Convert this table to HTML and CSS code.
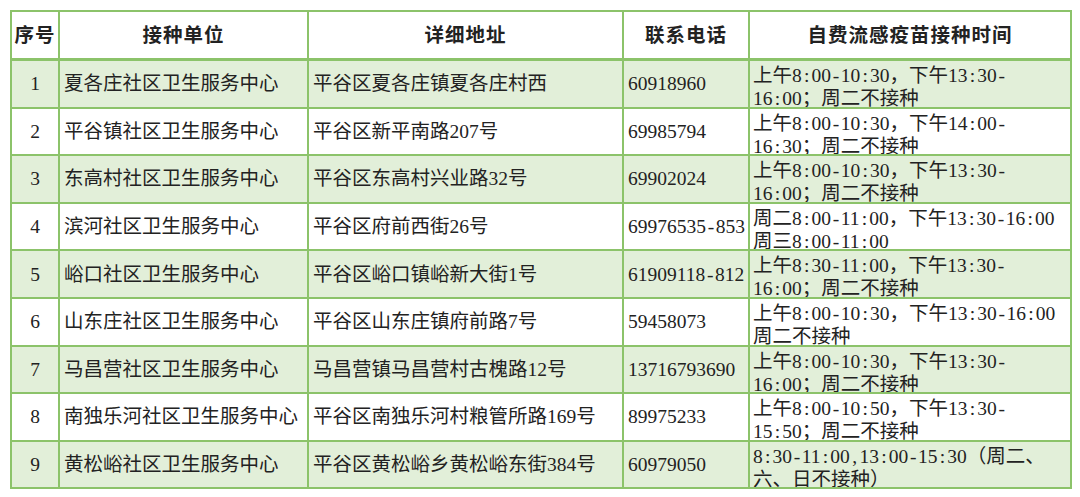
FILE: index.html
```html
<!DOCTYPE html>
<html lang="zh">
<head>
<meta charset="utf-8">
<link rel="stylesheet" href="styles.css">
</head>
<body>
<table class="sched">
  <colgroup>
    <col class="c-no"><col class="c-unit"><col class="c-addr"><col class="c-tel"><col class="c-time">
  </colgroup>
  <thead>
    <tr><th>序号</th><th>接种单位</th><th>详细地址</th><th>联系电话</th><th>自费流感疫苗接种时间</th></tr>
  </thead>
  <tbody>
    <tr class="g"><td class="no">1</td><td>夏各庄社区卫生服务中心</td><td>平谷区夏各庄镇夏各庄村西</td><td>60918960</td><td class="tm"><div class="tb">上午8<i>:</i>00<i>-</i>10<i>:</i>30，下午13<i>:</i>30<i>-</i><br>16<i>:</i>00；周二不接种</div></td></tr>
    <tr><td class="no">2</td><td>平谷镇社区卫生服务中心</td><td>平谷区新平南路207号</td><td>69985794</td><td class="tm"><div class="tb">上午8<i>:</i>00<i>-</i>10<i>:</i>30，下午14<i>:</i>00<i>-</i><br>16<i>:</i>30；周二不接种</div></td></tr>
    <tr class="g"><td class="no">3</td><td>东高村社区卫生服务中心</td><td>平谷区东高村兴业路32号</td><td>69902024</td><td class="tm"><div class="tb">上午8<i>:</i>00<i>-</i>10<i>:</i>30，下午13<i>:</i>30<i>-</i><br>16<i>:</i>00；周二不接种</div></td></tr>
    <tr><td class="no">4</td><td>滨河社区卫生服务中心</td><td>平谷区府前西街26号</td><td>69976535<i>-</i>853</td><td class="tm"><div class="tb">周二8<i>:</i>00<i>-</i>11<i>:</i>00，下午13<i>:</i>30<i>-</i>16<i>:</i>00<br>周三8<i>:</i>00<i>-</i>11<i>:</i>00</div></td></tr>
    <tr class="g"><td class="no">5</td><td>峪口社区卫生服务中心</td><td>平谷区峪口镇峪新大街1号</td><td>61909118<i>-</i>812</td><td class="tm"><div class="tb">上午8<i>:</i>30<i>-</i>11<i>:</i>00，下午13<i>:</i>30<i>-</i><br>16<i>:</i>00；周二不接种</div></td></tr>
    <tr><td class="no">6</td><td>山东庄社区卫生服务中心</td><td>平谷区山东庄镇府前路7号</td><td>59458073</td><td class="tm"><div class="tb">上午8<i>:</i>00<i>-</i>10<i>:</i>30，下午13<i>:</i>30<i>-</i>16<i>:</i>00<br>周二不接种</div></td></tr>
    <tr class="g"><td class="no">7</td><td>马昌营社区卫生服务中心</td><td>马昌营镇马昌营村古槐路12号</td><td>13716793690</td><td class="tm"><div class="tb">上午8<i>:</i>00<i>-</i>10<i>:</i>30，下午13<i>:</i>30<i>-</i><br>16<i>:</i>00；周二不接种</div></td></tr>
    <tr><td class="no">8</td><td>南独乐河社区卫生服务中心</td><td>平谷区南独乐河村粮管所路169号</td><td>89975233</td><td class="tm"><div class="tb">上午8<i>:</i>00<i>-</i>10<i>:</i>50，下午13<i>:</i>30<i>-</i><br>15<i>:</i>50；周二不接种</div></td></tr>
    <tr class="g"><td class="no">9</td><td>黄松峪社区卫生服务中心</td><td>平谷区黄松峪乡黄松峪东街384号</td><td>60979050</td><td class="tm"><div class="tb">8<i>:</i>30<i>-</i>11<i>:</i>00<i>,</i>13<i>:</i>00<i>-</i>15<i>:</i>30（周二、<br>六、日不接种）</div></td></tr>
  </tbody>
</table>
</body>
</html>
```
FILE: styles.css
```css
html, body {
  margin: 0;
  padding: 0;
  background: #ffffff;
}
body {
  padding: 10px 0 0 10px;
  font-family: "Liberation Serif", "Noto Sans CJK SC", serif;
  color: #222222;
}
.sched {
  border-collapse: collapse;
  table-layout: fixed;
  width: 1060px;
  font-size: 19.5px;
}
.c-no { width: 48px; }
.c-unit { width: 249px; }
.c-addr { width: 315px; }
.c-tel { width: 126px; }
.c-time { width: 322px; }
.sched th, .sched td {
  border: 2px solid #8cc36a;
  padding: 0 0 0 4px;
  white-space: nowrap;
  overflow: hidden;
  text-align: left;
  vertical-align: middle;
  line-height: 23px;
}
.sched th {
  height: 46px;
  font-weight: bold;
  text-align: center;
  padding: 0;
  letter-spacing: 1px;
  border-bottom-width: 3px;
}
.sched td {
  height: 45.6px;
}
.sched td.no {
  text-align: center;
  padding: 0;
}
.sched td.tm {
  padding: 0 0 0 3px;
}
.tb {
  box-sizing: border-box;
  height: 45.6px;
  padding-top: 3px;
  overflow: hidden;
  line-height: 23px;
}
.sched i {
  font-style: normal;
  display: inline-block;
  width: 0.5em;
  text-align: center;
}
.sched tr.g td {
  background: #e2efd9;
}
```
